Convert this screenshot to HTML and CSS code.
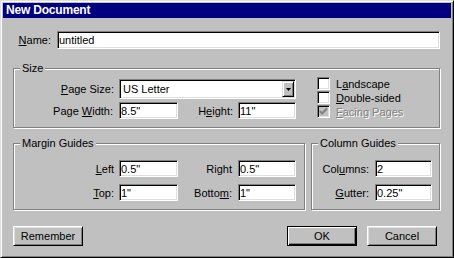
FILE: index.html
```html
<!DOCTYPE html>
<html lang="en">
<head>
  <meta charset="UTF-8">
  <title>New Document</title>
  <link rel="stylesheet" href="styles.css">
</head>
<body>
  <div class="window">
    <div class="titlebar">New Document</div>

    <div class="content">
      <div class="name-row">
        <label class="lbl name-lbl"><u>N</u>ame:</label>
        <input class="field name-field" type="text" value="untitled">
      </div>

      <fieldset class="group size-group">
        <legend>Size</legend>
        <div class="grid4">
          <label class="lbl"><u>P</u>age Size:</label>
          <div class="select">
            <span class="select-text">US Letter</span>
            <span class="drop">
              <svg width="5" height="3" viewBox="0 0 5 3"><polygon points="0,0 5,0 2.5,3" fill="#000"/></svg>
            </span>
          </div>
          <label class="lbl">Page <u>W</u>idth:</label>
          <input class="field" type="text" value="8.5&quot;">
          <label class="lbl">H<u>e</u>ight:</label>
          <input class="field" type="text" value="11&quot;">
        </div>
        <div class="checks">
          <label class="check"><span class="box"></span>L<u>a</u>ndscape</label>
          <label class="check"><span class="box"></span><u>D</u>ouble-sided</label>
          <label class="check disabled">
            <span class="box">
              <svg width="9" height="9" viewBox="0 0 9 9"><polyline points="1,4 3,6.5 8,1.5" fill="none" stroke="#808080" stroke-width="2"/></svg>
            </span><u>F</u>acing Pages
          </label>
        </div>
      </fieldset>

      <div class="guides">
        <fieldset class="group margin-group">
          <legend>Margin Guides</legend>
          <div class="grid4 tall">
            <label class="lbl"><u>L</u>eft</label>
            <input class="field" type="text" value="0.5&quot;">
            <label class="lbl">Right</label>
            <input class="field" type="text" value="0.5&quot;">
            <label class="lbl"><u>T</u>op:</label>
            <input class="field" type="text" value="1&quot;">
            <label class="lbl">Botto<u>m</u>:</label>
            <input class="field" type="text" value="1&quot;">
          </div>
        </fieldset>

        <fieldset class="group column-group">
          <legend>Column Guides</legend>
          <div class="grid2 tall">
            <label class="lbl">Col<u>u</u>mns:</label>
            <input class="field" type="text" value="2">
            <label class="lbl"><u>G</u>utter:</label>
            <input class="field" type="text" value="0.25&quot;">
          </div>
        </fieldset>
      </div>

      <div class="buttons">
        <button type="button" class="btn">Remember</button>
        <span class="spacer"></span>
        <button type="button" class="btn default">OK</button>
        <button type="button" class="btn">Cancel</button>
      </div>
    </div>
  </div>
</body>
</html>
```

FILE: styles.css
```css
html, body { margin: 0; padding: 0; background: #c0c0c0; }
body { font-family: "Liberation Sans", Arial, sans-serif; font-size: 11px; color: #000; }

.window {
  width: 454px; height: 258px; box-sizing: border-box; padding: 2px;
  border: 1px solid; border-color: #dfdfdf #000 #000 #dfdfdf;
  box-shadow: inset 1px 1px #fff, inset -1px -1px #808080;
  background: #c0c0c0;
}
.titlebar { height: 15px; line-height: 15px; padding-left: 3px; background: #000080; color: #fff; font-weight: bold; font-size: 12px; letter-spacing: -0.2px; }

.content { padding: 0 11px 0 10px; }

.lbl { text-align: right; padding-right: 5px; white-space: nowrap; }
u { text-decoration: underline; text-underline-offset: 1px; }

.field {
  box-sizing: border-box; height: 17px; width: 100%; margin: 0; padding: 0 1px;
  font: inherit; color: #000; background: #fff; outline: none;
  border: 1px solid; border-color: #808080 #fff #fff #808080;
  box-shadow: inset 1px 1px #000, inset -1px -1px #dfdfdf;
}

.name-row { display: flex; align-items: center; margin-top: 13px; }
.name-lbl { width: 38px; box-sizing: border-box; padding-right: 0; margin-right: 6px; }
.name-field { flex: 1; height: 18px; }

.group {
  margin: 0; padding: 0; min-width: 0; box-sizing: border-box;
  border: 1px solid #808080;
  box-shadow: inset 1px 1px #fff, 1px 1px #fff;
}
.group legend { margin-left: 6px; padding: 0 2px; line-height: 13px; background: #c0c0c0; }

.size-group { display: flex; align-items: flex-start; margin-top: 13px; padding: 0 0 8px; }
.size-group .grid4 { margin-top: 4px; }
.grid4 { display: grid; grid-template-columns: 105px 59px 60px 58px; row-gap: 3px; align-items: center; }
.grid4 .lbl:nth-of-type(even) { padding-right: 6px; }
.grid2 { display: grid; grid-template-columns: 63px 57px; align-items: center; }
.grid2 .lbl { padding-right: 6px; }
.tall { row-gap: 7px; }

.select {
  grid-column: 2 / 5; height: 20px; box-sizing: border-box; display: flex; align-items: center;
  background: #fff; border: 1px solid; border-color: #808080 #fff #fff #808080;
  box-shadow: inset 1px 1px #000, inset -1px -1px #dfdfdf; padding: 1px;
}
.select-text { flex: 1; padding-left: 2px; }
.drop {
  width: 12px; height: 16px; box-sizing: border-box; display: flex; align-items: center; justify-content: center;
  background: #c0c0c0; border: 1px solid; border-color: #dfdfdf #000 #000 #dfdfdf;
  box-shadow: inset 1px 1px #fff, inset -1px -1px #808080;
}
.drop svg { display: block; }

.checks { margin-left: 21px; margin-top: 2px; display: flex; flex-direction: column; gap: 1px; }
.check { display: flex; align-items: center; height: 13px; white-space: nowrap; }
.box {
  width: 13px; height: 13px; box-sizing: border-box; margin-right: 6px; flex: none;
  display: flex; align-items: center; justify-content: center;
  background: #fff; border: 1px solid; border-color: #808080 #fff #fff #808080;
  box-shadow: inset 1px 1px #000, inset -1px -1px #dfdfdf;
}
.check.disabled { color: #808080; text-shadow: 1px 1px #fff; }
.check.disabled .box { background: #c0c0c0; }

.guides { display: flex; margin-top: 9px; }
.margin-group { width: 292px; padding: 10px 0 8px; }
.column-group { width: 129px; margin-left: 6px; padding: 10px 0 8px; }

.buttons { display: flex; gap: 10px; margin-top: 16px; padding-right: 3px; }
.spacer { flex: 1; }
.btn {
  width: 70px; height: 20px; margin: 0; padding: 0; font: inherit; color: #000; background: #c0c0c0;
  border: 1px solid; border-color: #fff #000 #000 #fff;
  box-shadow: inset 1px 1px #dfdfdf, inset -1px -1px #808080;
}
.btn.default { border-color: #000; box-shadow: inset 1px 1px #fff, inset -1px -1px #000, inset -2px -2px #808080; }
```
